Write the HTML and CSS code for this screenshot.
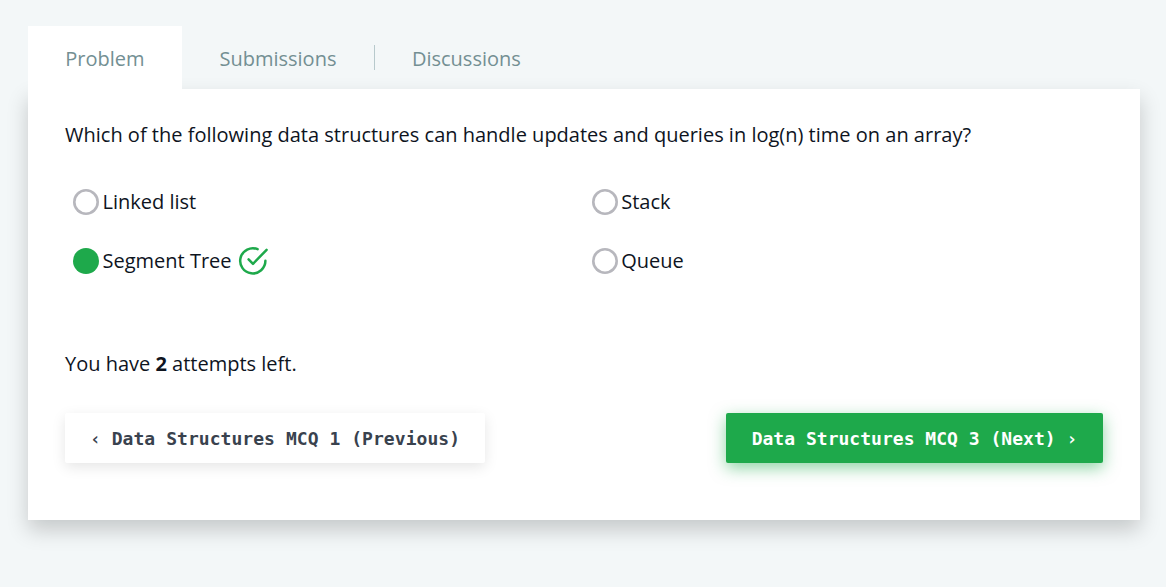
FILE: index.html
```html
<!DOCTYPE html>
<html lang="en">
<head>
<meta charset="utf-8">
<title>Data Structures MCQ 2</title>
<link rel="stylesheet" href="styles.css">
</head>
<body>
<main class="page">
  <nav class="tabs">
    <a class="tab tab-active">Problem</a>
    <a class="tab">Submissions</a>
    <a class="tab tab-divided">Discussions</a>
  </nav>
  <section class="card">
    <p class="question">Which of the following data structures can handle updates and queries in log(n) time on an array?</p>
    <div class="options">
      <label class="option"><span class="radio"></span><span>Linked list</span></label>
      <label class="option"><span class="radio"></span><span>Stack</span></label>
      <label class="option"><span class="radio radio-checked"></span><span>Segment Tree</span>
        <svg class="check" viewBox="0 0 32 32" fill="none" stroke="currentColor" stroke-width="2.5" stroke-linecap="round" stroke-linejoin="round">
          <path d="M20.6 4.2A12.6 12.6 0 1 0 28.4 15.8"/>
          <path d="M11.6 14.3l4.4 4.5L29.6 4.8"/>
        </svg>
      </label>
      <label class="option"><span class="radio"></span><span>Queue</span></label>
    </div>
    <p class="attempts">You have <strong>2</strong> attempts left.</p>
    <div class="actions">
      <a class="button">‹ Data Structures MCQ 1 (Previous)</a>
      <a class="button button-next">Data Structures MCQ 3 (Next) ›</a>
    </div>
  </section>
</main>
</body>
</html>
```
FILE: styles.css
```css
* { box-sizing: border-box; }

body {
  margin: 0;
  background: #f3f7f8;
  color: #0e141e;
  font-family: "Open Sans", sans-serif;
  font-size: 20px;
  line-height: 30px;
}

p { margin: 0; }

.page { height: 587px; padding: 26px 26px 0 28px; overflow: hidden; }

.tabs { position: relative; z-index: 1; display: flex; height: 63px; }

.tab {
  display: flex;
  align-items: center;
  padding: 3px 37.8px 0 37.2px;
  color: #738f93;
}

.tab-active { background: #fff; }

.tab-divided { padding-left: 0; }

.tab-divided::before {
  content: "";
  width: 1px;
  height: 25px;
  margin: -3px 36.7px 0 0;
  background: #b7c9cc;
}

.card {
  height: 431px;
  padding: 31px 37px 0;
  background: #fff;
  box-shadow: 0 10px 20px rgba(0, 0, 0, .19);
}

.question { letter-spacing: .005px; }

.options {
  display: grid;
  grid-template-columns: 518.7px 1fr;
  grid-auto-rows: 59px;
  margin-top: 22px;
  padding-left: 8.3px;
}

.option { display: flex; align-items: center; }

.radio {
  width: 26px;
  height: 26px;
  margin-right: 3.2px;
  border-radius: 50%;
  box-shadow: inset 0 0 0 2.6px #b7b7bd;
}

.radio-checked { background: #1ea94b; box-shadow: none; }

.check { width: 32px; height: 32px; margin-left: 5.8px; color: #1ea94b; }

.attempts { margin-top: 59px; }

.actions { display: flex; justify-content: space-between; margin-top: 34px; }

.button {
  display: flex;
  justify-content: center;
  width: 420px;
  height: 50px;
  border-radius: 2px;
  background: #fff;
  box-shadow: 0 4px 14px rgba(0, 0, 0, .1);
  color: #39424e;
  font: bold 18px/51px "DejaVu Sans Mono", monospace;
  letter-spacing: .05px;
  white-space: pre;
}

.button-next {
  width: 377px;
  background: #1ea94b;
  box-shadow: 0 5px 16px rgba(30, 169, 75, .5);
  color: #fff;
  letter-spacing: .02px;
}
```
